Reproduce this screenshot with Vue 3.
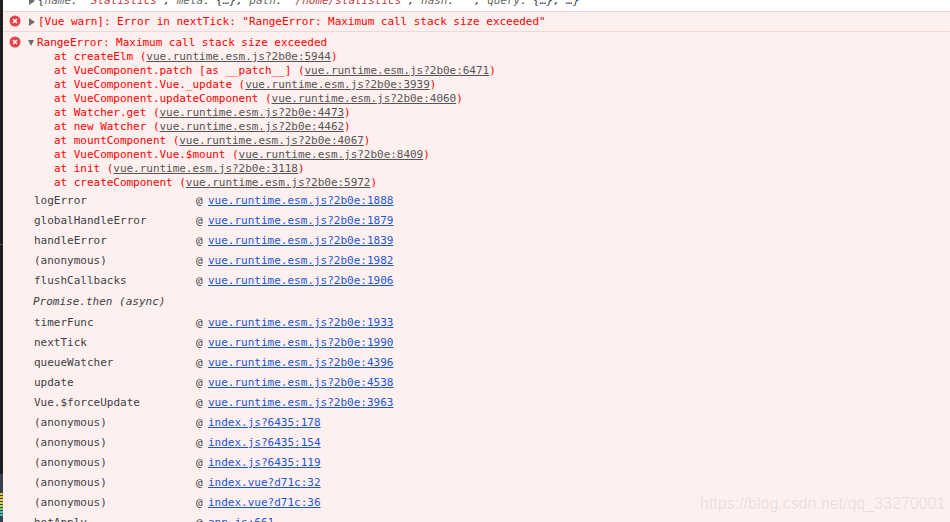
<script setup>
const stack = [
  ['createElm', 'vue.runtime.esm.js?2b0e:5944'],
  ['VueComponent.patch [as __patch__]', 'vue.runtime.esm.js?2b0e:6471'],
  ['VueComponent.Vue._update', 'vue.runtime.esm.js?2b0e:3939'],
  ['VueComponent.updateComponent', 'vue.runtime.esm.js?2b0e:4060'],
  ['Watcher.get', 'vue.runtime.esm.js?2b0e:4473'],
  ['new Watcher', 'vue.runtime.esm.js?2b0e:4462'],
  ['mountComponent', 'vue.runtime.esm.js?2b0e:4067'],
  ['VueComponent.Vue.$mount', 'vue.runtime.esm.js?2b0e:8409'],
  ['init', 'vue.runtime.esm.js?2b0e:3118'],
  ['createComponent', 'vue.runtime.esm.js?2b0e:5972']
]
const first = [
  ['logError', 'vue.runtime.esm.js?2b0e:1888'],
  ['globalHandleError', 'vue.runtime.esm.js?2b0e:1879'],
  ['handleError', 'vue.runtime.esm.js?2b0e:1839'],
  ['(anonymous)', 'vue.runtime.esm.js?2b0e:1982'],
  ['flushCallbacks', 'vue.runtime.esm.js?2b0e:1906']
]
const second = [
  ['timerFunc', 'vue.runtime.esm.js?2b0e:1933'],
  ['nextTick', 'vue.runtime.esm.js?2b0e:1990'],
  ['queueWatcher', 'vue.runtime.esm.js?2b0e:4396'],
  ['update', 'vue.runtime.esm.js?2b0e:4538'],
  ['Vue.$forceUpdate', 'vue.runtime.esm.js?2b0e:3963'],
  ['(anonymous)', 'index.js?6435:178'],
  ['(anonymous)', 'index.js?6435:154'],
  ['(anonymous)', 'index.js?6435:119'],
  ['(anonymous)', 'index.vue?d71c:32'],
  ['(anonymous)', 'index.vue?d71c:36'],
  ['hotApply', 'app.js:661']
]
const dashes = ['#e0c040', '#e0c040', '#e8d050', '#d8d040', '#b8d050', '#80d080', '#50c8a0', '#40c0b0']
</script>

<template>
  <div class="console">
    <div class="strip">
      <div class="strip-dark"><div class="strip-line"></div></div>
      <div class="strip-foot">
        <div class="dashes">
          <i v-for="(c, i) in dashes" :key="i" class="dash" :style="{ background: c }"></i>
        </div>
      </div>
    </div>
    <div class="main">
      <div class="row-top">
        <span class="tri right top-tri"></span>
        <span class="obj">{<span class="key">name</span>: <span class="str">"Statistics"</span>, <span class="key">meta</span>: {…}, <span class="key">path</span>: <span class="str">"/home/statistics"</span>, <span class="key">hash</span>: <span class="str">""</span>, <span class="key">query</span>: {…}, …}</span>
      </div>
      <div class="msg warn">
        <svg class="err" viewBox="0 0 12 12"><circle cx="6" cy="6" r="5.5" fill="#e8414a"/><path d="M4 4l4 4M8 4l-4 4" stroke="#fff" stroke-width="1.5"/></svg>
        <span class="tri right"></span>
        <span>[Vue warn]: Error in nextTick: "RangeError: Maximum call stack size exceeded"</span>
      </div>
      <div class="msg error">
        <div class="head">
          <svg class="err up" viewBox="0 0 12 12"><circle cx="6" cy="6" r="5.5" fill="#e8414a"/><path d="M4 4l4 4M8 4l-4 4" stroke="#fff" stroke-width="1.5"/></svg>
          <span class="tri down"></span>
          <span>RangeError: Maximum call stack size exceeded</span>
        </div>
        <div v-for="s in stack" :key="s[1]" class="at">at {{ s[0] }} (<span class="src">{{ s[1] }}</span>)</div>
      </div>
      <div class="frames">
        <div v-for="f in first" :key="f[0]" class="frame">
          <span class="fn">{{ f[0] }}</span><span class="atsign">@</span><span class="link">{{ f[1] }}</span>
        </div>
        <div class="async">Promise.then (async)</div>
        <div v-for="(f, i) in second" :key="i" class="frame">
          <span class="fn">{{ f[0] }}</span><span class="atsign">@</span><span class="link">{{ f[1] }}</span>
        </div>
      </div>
      <div class="mark">https://blog.csdn.net/qq_33270001</div>
    </div>
  </div>
</template>

<style>
html, body { margin: 0; padding: 0; overflow: hidden; background: #fff0f0; }
</style>

<style scoped>
.console {
  width: 950px;
  height: 522px;
  display: flex;
  overflow: hidden;
  font-family: "DejaVu Sans Mono", monospace;
  font-size: 11px;
  line-height: 14px;
  background: #fff0f0;
}
.strip { width: 3px; flex: none; display: flex; flex-direction: column; background: #1f1f1f; }
.strip-dark { height: 474px; flex: none; padding-top: 244px; box-sizing: border-box; }
.strip-line { height: 1px; background: #555; }
.strip-foot { flex: 1; background: #3a3f4e; padding-top: 19px; }
.dashes { display: flex; flex-direction: column; gap: 1px; }
.dash { display: block; height: 2px; }
.main { flex: 1; position: relative; min-width: 0; }
.row-top {
  height: 11px;
  background: #fff;
  border-bottom: 1px solid #f5cfcf;
  padding-left: 35px;
  position: relative;
  overflow: hidden;
  color: #303942;
  font-style: italic;
  white-space: nowrap;
}
.obj { display: block; margin-top: -6px; letter-spacing: -0.02px; }
.key { color: #666; }
.str { color: #c4403c; }
.top-tri { position: absolute; left: 26px; top: -3px; }
.msg { color: #f00; white-space: pre; letter-spacing: -0.03px; }
.warn {
  height: 19px;
  display: flex;
  align-items: center;
  border-bottom: 1px solid #f5d5d5;
  box-sizing: content-box;
}
.error { padding-top: 4px; }
.head { display: flex; align-items: center; height: 14px; }
.err { width: 12px; height: 12px; flex: none; margin-left: 6px; margin-right: 8px; position: relative; top: -0.5px; }
.err.up { top: -1px; }
.tri { flex: none; width: 0; height: 0; display: inline-block; }
.right { border-left: 6px solid #6e6e6e; border-top: 4px solid transparent; border-bottom: 4px solid transparent; margin-left: 0; margin-right: 3px; }
.down { border-top: 6px solid #6e6e6e; border-left: 3.5px solid transparent; border-right: 3.5px solid transparent; margin-left: -1px; margin-right: 3px; }
.at { padding-left: 51px; height: 14px; }
.src { color: #555; text-decoration: underline; }
.frames { padding-top: 1px; color: #3c3f45; }
.frame { height: 20px; display: flex; align-items: center; padding-left: 31px; white-space: pre; }
.fn { width: 162px; flex: none; }
.atsign { width: 12px; flex: none; }
.link { color: #1a56d6; text-decoration: underline; }
.async { height: 22px; padding-left: 30px; font-style: italic; display: flex; align-items: center; }
.mark {
  position: absolute;
  left: 697px;
  top: 495px;
  font-family: "Liberation Sans", sans-serif;
  font-size: 16px;
  line-height: 18px;
  color: rgba(150, 150, 150, 0.22);
  text-shadow: 1px 1px 0 rgba(255, 255, 255, 0.4);
  white-space: nowrap;
}
</style>
